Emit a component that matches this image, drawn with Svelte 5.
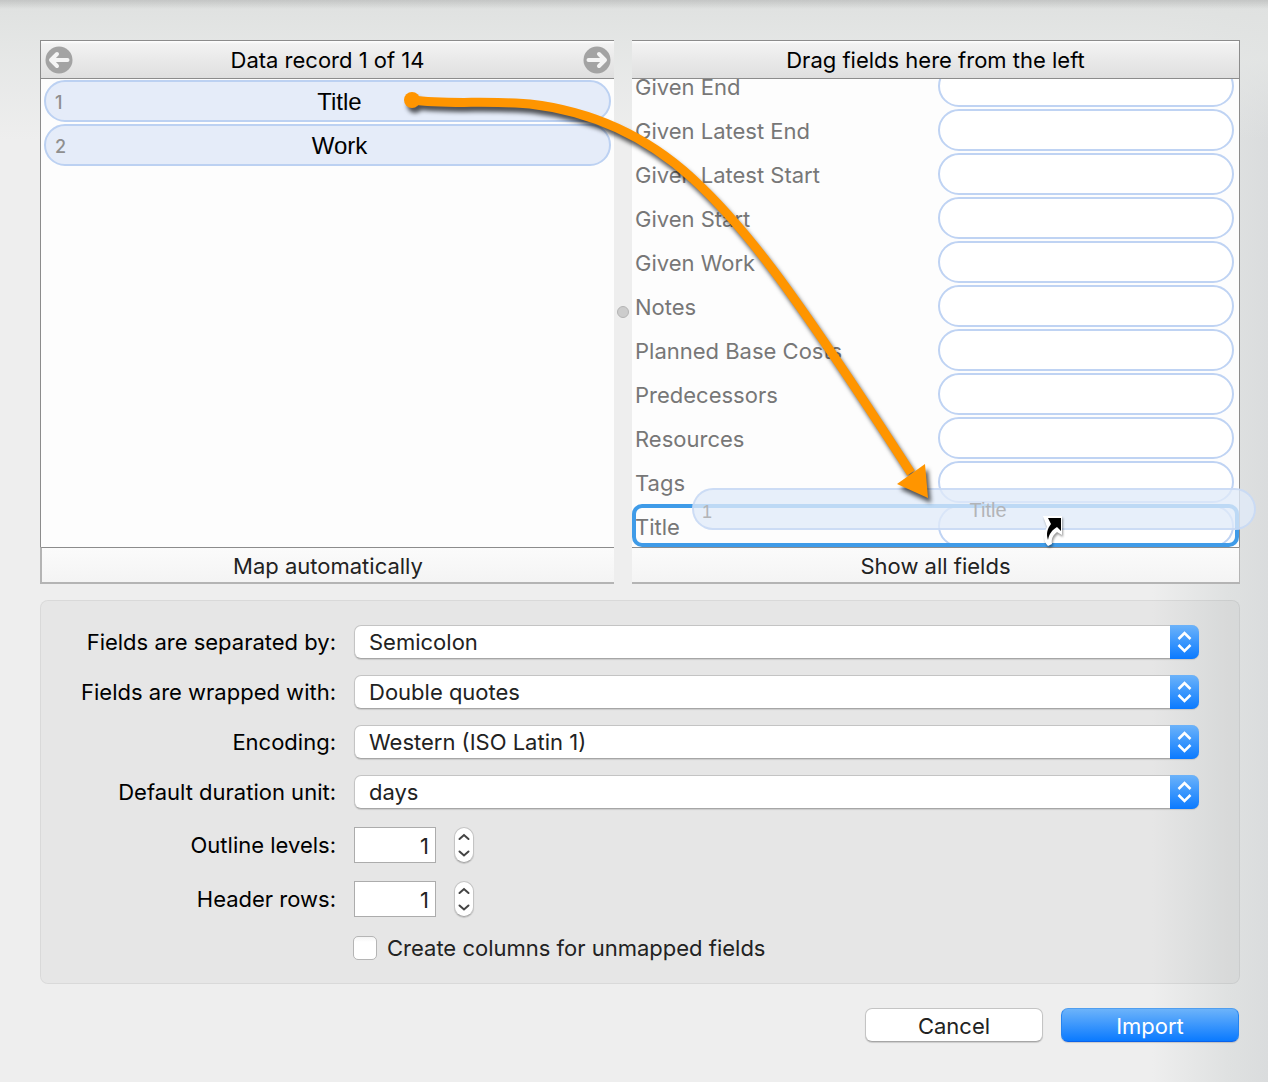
<script lang="ts">
  type Field = { name: string; target?: boolean };
  type Option = { id: string; label: string; value: string; choices: string[] };

  const columns = ["Title", "Work"];

  const fields: Field[] = [
    { name: "Given End" },
    { name: "Given Latest End" },
    { name: "Given Latest Start" },
    { name: "Given Start" },
    { name: "Given Work" },
    { name: "Notes" },
    { name: "Planned Base Costs" },
    { name: "Predecessors" },
    { name: "Resources" },
    { name: "Tags" },
    { name: "Title", target: true },
  ];

  let options = $state<Option[]>([
    { id: "separator", label: "Fields are separated by:", value: "Semicolon", choices: ["Semicolon", "Comma", "Tab"] },
    { id: "wrapper", label: "Fields are wrapped with:", value: "Double quotes", choices: ["Double quotes", "Single quotes"] },
    { id: "encoding", label: "Encoding:", value: "Western (ISO Latin 1)", choices: ["Western (ISO Latin 1)", "Unicode (UTF-8)"] },
    { id: "unit", label: "Default duration unit:", value: "days", choices: ["days", "hours", "weeks"] },
  ]);

  let counts = $state([
    { id: "levels", label: "Outline levels:", value: 1 },
    { id: "headers", label: "Header rows:", value: 1 },
  ]);

  let createColumns = $state(false);
  let record = $state(1);
  const total = 14;

  function step(i: number, by: number): void {
    counts[i].value = Math.max(0, counts[i].value + by);
  }
</script>

<main>
  <div class="mapper">
    <section class="pane source">
      <header>
        <button class="nav" aria-label="Previous record" onclick={() => (record = Math.max(1, record - 1))}>
          <svg viewBox="0 0 28 28" width="28" height="28">
            <circle cx="14" cy="14" r="13.5" fill="#a3a3a3" />
            <path d="M22.500 14H7M12 8L6 14l6 6" />
          </svg>
        </button>
        <h2>Data record {record} of {total}</h2>
        <button class="nav" aria-label="Next record" onclick={() => (record = Math.min(total, record + 1))}>
          <svg viewBox="0 0 28 28" width="28" height="28">
            <circle cx="14" cy="14" r="13.5" fill="#a3a3a3" />
            <path d="M5.500 14H21M16 8l6 6-6 6" />
          </svg>
        </button>
      </header>
      <ol class="columns">
        {#each columns as column, i}
          <li class="pill"><span class="index">{i + 1}</span>{column}</li>
        {/each}
      </ol>
      <button class="action">Map automatically</button>
    </section>

    <div class="splitter"><span class="grip"></span></div>

    <section class="pane dest">
      <header><h2>Drag fields here from the left</h2></header>
      <ul class="fields">
        {#each fields as field}
          <li class:target={field.target}>
            <span class="name">{field.name}</span>
            <span class="slot"></span>
          </li>
        {/each}
      </ul>
      <button class="action">Show all fields</button>
      <!-- pill being dragged -->
      <div class="ghost"><span class="ghost-index">1</span>Title</div>
      <svg class="cursor" viewBox="0 0 28 38" width="28" height="38">
        <path d="M3 5h19v19l-5-3c-4 3-6 7-5 12l-4 2c-5-5-5-12-1-19z" fill="#fff" />
        <path d="M8 7h13v13l-4-4c-5 3-8 7-9 13-2-6-1-11 3-16z" fill="#000" />
      </svg>
    </section>

    <svg class="arrow" viewBox="0 0 1200 544" width="1200" height="544">
      <g transform="translate(-40 -40)">
        <circle cx="412" cy="100" r="8" />
        <path class="line" d="M412 100C450 105 485 100 530 104C590 111 645 135 692 178C741 223 785 278 911 473" />
        <path d="M928 498L925 464L897 484Z" />
      </g>
    </svg>
  </div>

  <form class="settings">
    {#each options as option}
      <div class="row">
        <label for={option.id}>{option.label}</label>
        <div class="select">
          <select id={option.id} bind:value={option.value}>
            {#each option.choices as choice}
              <option>{choice}</option>
            {/each}
          </select>
          <svg class="caret" viewBox="0 0 29 34" width="29" height="34">
            <path d="M8.500 14L14.500 8l6 6M8.500 20l6 6 6-6" />
          </svg>
        </div>
      </div>
    {/each}
    {#each counts as count, i}
      <div class="row count">
        <label for={count.id}>{count.label}</label>
        <input id={count.id} type="text" inputmode="numeric" bind:value={count.value} />
        <span class="stepper">
          <button type="button" aria-label="Increase" onclick={() => step(i, 1)}>
            <svg viewBox="0 0 12 8" width="12" height="8"><path d="M1.500 6L6 2l4.500 4" /></svg>
          </button>
          <button type="button" aria-label="Decrease" onclick={() => step(i, -1)}>
            <svg viewBox="0 0 12 8" width="12" height="8"><path d="M1.500 1.500L6 5.500l4.500-4" /></svg>
          </button>
        </span>
      </div>
    {/each}
    <div class="check">
      <input id="unmapped" type="checkbox" bind:checked={createColumns} />
      <label for="unmapped">Create columns for unmapped fields</label>
    </div>
  </form>

  <footer>
    <button>Cancel</button>
    <button class="primary">Import</button>
  </footer>
</main>

<style>
  :global(body) {
    margin: 0;
    background: #eeeeee;
  }
  main {
    box-sizing: border-box;
    min-height: 100vh;
    padding: 40px 28px 40px 40px;
    overflow: hidden;
    background:
      linear-gradient(rgba(0, 0, 0, 0.12), rgba(0, 0, 0, 0) 9px),
      linear-gradient(#dfe1e0, rgba(228, 230, 229, 0.8) 60px, rgba(238, 238, 238, 0) 140px),
      linear-gradient(to left, #dadcdd, #dfe1e1 40px, rgba(238, 238, 238, 0) 116px),
      #eeeeee;
    color: #000;
    font: 22px/28px Inter, "Liberation Sans", sans-serif;
  }
  button,
  input,
  select {
    font: inherit;
    color: #222;
  }
  button {
    padding: 0;
    border: 0;
    background: none;
  }
  ol,
  ul {
    list-style: none;
    margin: 0;
    padding: 0;
  }

  .mapper {
    position: relative;
    display: grid;
    grid-template-columns: 574fr 18px 608fr;
  }
  .pane {
    position: relative;
    display: flex;
    flex-direction: column;
    min-width: 0;
  }
  .pane header {
    display: flex;
    align-items: center;
    justify-content: space-between;
    box-sizing: border-box;
    height: 39px;
    border: 0 solid #8c8c8c;
    border-width: 1px 0;
    background: linear-gradient(#ffffff, #f2f2f2 3px, #dfdfdf);
  }
  .source header,
  .source .columns {
    border-left: 1px solid #8c8c8c;
  }
  .dest header,
  .dest .fields {
    border-right: 1px solid #8c8c8c;
  }
  h2 {
    flex: 1;
    margin: 0;
    text-align: center;
    font-size: 22px;
    font-weight: 400;
  }
  .nav {
    width: 28px;
    height: 28px;
    margin: 0 3px 0 4px;
  }
  .nav svg {
    display: block;
  }
  .nav path {
    fill: none;
    stroke: #f4f4f4;
    stroke-width: 4;
    stroke-linecap: round;
    stroke-linejoin: round;
  }
  .columns,
  .fields {
    box-sizing: border-box;
    height: 468px;
    background: #fdfdfd;
    overflow: hidden;
  }
  .columns {
    display: flex;
    flex-direction: column;
    gap: 2px;
    padding: 1px 3px;
  }
  .pill,
  .ghost {
    box-sizing: border-box;
    height: 42px;
    border: 2px solid #bcd1f2;
    border-radius: 21px;
    background: #e5ecf9;
    font: 24px/40px "Liberation Sans", Arial, sans-serif;
    text-align: center;
  }
  .pill {
    position: relative;
    padding-left: 24px;
  }
  .index {
    position: absolute;
    top: 1px;
    left: 9px;
    color: #8f8f8f;
    font: 500 18px/40px Inter, sans-serif;
  }
  .splitter {
    display: flex;
    align-items: center;
    justify-content: center;
  }
  .grip {
    width: 10px;
    height: 10px;
    border: 1px solid #b4b4b4;
    border-radius: 50%;
    background: #cccccc;
  }
  .fields {
    display: flex;
    flex-direction: column;
    justify-content: flex-end;
  }
  .fields li {
    position: relative;
    display: flex;
    flex: none;
    align-items: center;
    box-sizing: border-box;
    height: 44px;
    padding: 2px 5px 0 3px;
    color: #777777;
  }
  .name {
    flex: 1;
    padding-top: 2px;
  }
  .slot {
    box-sizing: border-box;
    width: 296px;
    height: 42px;
    border: 2px solid #bfd3f3;
    border-radius: 21px;
    background: #fff;
  }
  .target::after {
    content: "";
    position: absolute;
    inset: 1px 0 0;
    border: 4px solid #3f9be8;
    border-radius: 10px;
  }
  .action {
    box-sizing: border-box;
    height: 37px;
    padding-top: 2px;
    border: 0 solid #b4b4b4;
    border-top: 1px solid #8c8c8c;
    border-bottom-width: 2px;
    background: linear-gradient(#fbfbfb, #f4f4f4);
  }
  .source .action {
    border-left-width: 2px;
  }
  .dest .action {
    border-right-width: 1px;
  }
  .ghost {
    position: absolute;
    top: 448px;
    right: -16px;
    left: 60px;
    padding-left: 28px;
    border-color: rgba(195, 213, 243, 0.75);
    background: rgba(224, 235, 249, 0.78);
    color: #b2b4b7;
    font-size: 20px;
  }
  .ghost-index {
    position: absolute;
    top: 2px;
    left: 8px;
    font-size: 18px;
  }
  .cursor {
    position: absolute;
    top: 471px;
    left: 408px;
    filter: drop-shadow(1px 2px 1px rgba(0, 0, 0, 0.4));
  }
  .arrow {
    position: absolute;
    top: 0;
    left: 0;
    overflow: visible;
    pointer-events: none;
    fill: #ff9500;
    filter: drop-shadow(3px 5px 2px rgba(0, 0, 0, 0.65));
  }
  .line {
    fill: none;
    stroke: #ff9500;
    stroke-width: 9;
  }

  .settings {
    display: flex;
    flex-direction: column;
    gap: 16px;
    margin-top: 16px;
    padding: 24px 40px 20px 0;
    border: 1px solid rgba(0, 0, 0, 0.06);
    border-radius: 8px;
    background: rgba(0, 0, 0, 0.033);
  }
  .row {
    display: flex;
    align-items: center;
    gap: 18px;
    height: 34px;
  }
  .row label {
    width: 295px;
    text-align: right;
  }
  .select {
    position: relative;
    flex: 1;
    display: flex;
  }
  select {
    flex: 1;
    height: 34px;
    padding: 0 40px 0 14px;
    appearance: none;
    border: 1px solid #c4c4c4;
    border-bottom-color: #a6a6a6;
    border-radius: 7px;
    background: #fff;
    box-shadow: 0 1px 1px rgba(0, 0, 0, 0.12);
  }
  .caret {
    position: absolute;
    top: 0;
    right: 0;
    border-radius: 0 7px 7px 0;
    background: linear-gradient(#6cb3fa, #0a7aff);
    pointer-events: none;
  }
  .caret path {
    fill: none;
    stroke: #fff;
    stroke-width: 2.5;
  }
  .count {
    height: 36px;
    padding-top: 2px;
  }
  .count input {
    box-sizing: border-box;
    width: 82px;
    height: 36px;
    padding: 2px 6px 0;
    border: 1px solid #acacac;
    background: #fff;
    text-align: right;
  }
  .stepper {
    display: flex;
    flex-direction: column;
    box-sizing: border-box;
    width: 20px;
    height: 36px;
    border: 1px solid #c4c4c4;
    border-bottom-color: #a6a6a6;
    border-radius: 10px;
    background: #fff;
    box-shadow: 0 1px 1px rgba(0, 0, 0, 0.15);
  }
  .stepper button {
    display: flex;
    flex: 1;
    align-items: center;
    justify-content: center;
  }
  .stepper path {
    fill: none;
    stroke: #444;
    stroke-width: 2;
    stroke-linecap: round;
  }
  .check {
    display: flex;
    align-items: center;
    gap: 10px;
    height: 30px;
    padding-left: 312px;
    color: #222;
  }
  .check input {
    width: 24px;
    height: 24px;
    margin: 0;
    appearance: none;
    border: 1px solid #b5b5b5;
    border-radius: 5px;
    background: linear-gradient(#f4f4f4, #ffffff 5px);
  }
  .check input:checked {
    background: #0a7aff;
  }

  footer {
    display: flex;
    justify-content: flex-end;
    gap: 18px;
    margin-top: 24px;
    padding-right: 1px;
  }
  footer button {
    box-sizing: border-box;
    width: 178px;
    height: 34px;
    padding-top: 1px;
    border: 1px solid #c4c4c4;
    border-bottom-color: #a6a6a6;
    border-radius: 7px;
    background: #fff;
    box-shadow: 0 1px 1px rgba(0, 0, 0, 0.15);
  }
  footer .primary {
    border-color: #4f9eef #2584f0 #0a62ea;
    background: linear-gradient(#6cb3fa, #0a7aff);
    color: #fff;
  }
</style>
